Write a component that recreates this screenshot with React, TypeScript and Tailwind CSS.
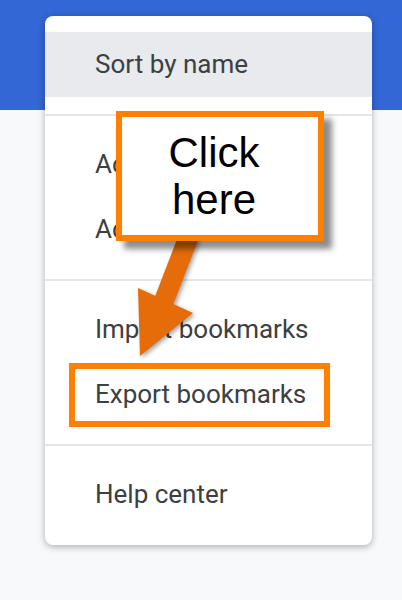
import React from "react";

const items = [
  ["Add new bookmark", "Add new folder"],
  ["Import bookmarks", "Export bookmarks"],
  ["Help center"],
];

function MenuItem({ label, boxed }: { label: string; boxed?: boolean }) {
  return (
    <div className="relative h-[65px] flex items-center pl-[50px] text-[26px] text-[#3c4043]">
      {boxed && (
        <div className="absolute left-[24px] top-[1px] w-[261px] h-[64px] border-[6px] border-[#ff7f00]" />
      )}
      <span className="relative">{label}</span>
    </div>
  );
}

export default function App() {
  return (
    <div
      className="relative w-full h-[600px] bg-[#f8f9fa] overflow-hidden"
      style={{ fontFamily: "Roboto, 'Liberation Sans', sans-serif" }}
    >
      <div className="h-[110px] bg-[#3367d6]" />

      {/* menu */}
      <div className="absolute left-[45px] top-[16px] w-[327px] bg-white rounded-[8px] shadow-[0_2px_7px_rgba(0,0,0,0.3)] pt-[16px] pb-[18px]">
        <div className="h-[65px] flex items-center pl-[50px] bg-[#e8eaed] text-[26px] text-[#3c4043]">
          Sort by name
        </div>
        {items.map((group, gi) => (
          <div key={gi}>
            <div className="mt-[17px] mb-[16px] h-[2px] bg-[#e6e6e6]" />
            {group.map((label) => (
              <MenuItem key={label} label={label} boxed={label === "Export bookmarks"} />
            ))}
          </div>
        ))}
      </div>

      {/* arrow */}
      <svg
        className="absolute left-0 top-0 drop-shadow-[2px_2px_2px_rgba(0,0,0,0.35)]"
        width="402"
        height="600"
      >
        <line x1="189" y1="236" x2="162" y2="306" stroke="#e66c0a" strokeWidth="20" />
        <polygon points="138,288 193,313 140,356" fill="#e66c0a" />
      </svg>

      {/* callout */}
      <div
        className="absolute left-[116px] top-[111px] w-[208px] h-[130px] bg-white border-[6px] border-[#ff7f00] shadow-[8px_8px_6px_rgba(0,0,0,0.45)] flex flex-col items-center justify-center pr-[12px] text-[42px] leading-[47px] text-black"
        style={{ fontFamily: "'Liberation Sans', Arial, sans-serif" }}
      >
        <span>Click</span>
        <span>here</span>
      </div>
    </div>
  );
}
